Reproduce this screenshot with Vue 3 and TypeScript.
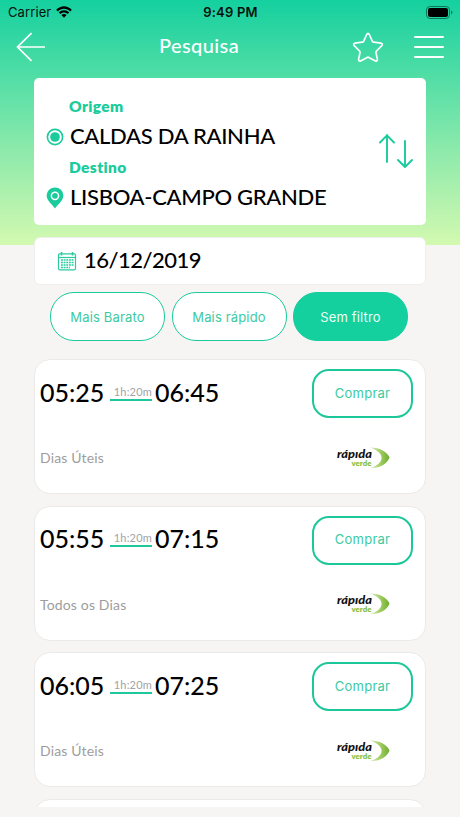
<script setup lang="ts">
interface Trip {
  departure: string
  arrival: string
  duration: string
  days: string
}

const filters: { label: string; active: boolean }[] = [
  { label: 'Mais Barato', active: false },
  { label: 'Mais rápido', active: false },
  { label: 'Sem filtro', active: true },
]

const trips: Trip[] = [
  { departure: '05:25', arrival: '06:45', duration: '1h:20m', days: 'Dias Úteis' },
  { departure: '05:55', arrival: '07:15', duration: '1h:20m', days: 'Todos os Dias' },
  { departure: '06:05', arrival: '07:25', duration: '1h:20m', days: 'Dias Úteis' },
]
</script>

<template>
  <div class="screen">
    <div class="status">
      <div class="carrier">
        <span class="carrier-name">Carrier</span>
        <svg width="16" height="12" viewBox="0 0 16 12">
          <path d="M0.2 3.8C4.6-.9 11.4-.9 15.8 3.8L14.2 5.4C10.7 1.9 5.3 1.9 1.8 5.4ZM2.8 6.4C5.8 3.5 10.2 3.5 13.2 6.4L11.6 8C9.5 6 6.5 6 4.4 8ZM5.4 9C6.9 7.7 9.1 7.7 10.6 9L8 11.7Z" fill="#000" />
        </svg>
      </div>
      <span class="clock">9:49 PM</span>
      <svg class="battery" width="27" height="13" viewBox="0 0 27 13">
        <rect x="0.5" y="0.5" width="23" height="12" rx="3.4" fill="none" stroke="#08775a" />
        <rect x="2" y="2" width="20" height="9" rx="2" fill="#000" />
        <path d="M25 4.6Q26.4 5.2 26.4 6.5Q26.4 7.8 25 8.4Z" fill="#08775a" />
      </svg>
    </div>

    <header class="nav">
      <svg class="back" width="30" height="30" viewBox="0 0 30 30" fill="none" stroke="#fff" stroke-width="1.7">
        <path d="M15.5 1.2L1.5 15L15.5 28.8M1.5 15H29" />
      </svg>
      <h1 class="title">Pesquisa</h1>
      <svg class="star" width="32" height="31" viewBox="0 0 32 31" fill="none" stroke="#fff" stroke-width="1.7" stroke-linejoin="round">
        <path d="M14.7 2.5Q16 .3 17.3 2.5L20.4 9.3Q20.8 10.1 21.7 10.2L29 11.2Q31.3 11.8 29.8 13.6L24.5 19Q23.9 19.7 24 20.5L25.4 27.4Q25.5 29.6 23.4 28.9L16.8 25.4Q16 25 15.2 25.4L8.6 28.9Q6.5 29.6 6.6 27.4L8 20.5Q8.1 19.7 7.5 19L2.2 13.6Q.7 11.8 3 11.2L10.3 10.2Q11.2 10.1 11.6 9.3Z" />
      </svg>
      <svg class="menu" width="30" height="24" viewBox="0 0 30 24" stroke="#fff" stroke-width="2" stroke-linecap="round">
        <path d="M1 2H29M1 12H29M1 22H29" />
      </svg>
    </header>

    <section class="route">
      <div class="places">
        <p class="label">Origem</p>
        <div class="place">
          <svg width="18" height="18" viewBox="0 0 18 18">
            <circle cx="9" cy="9" r="7.6" fill="#fff" stroke="#1acb9c" stroke-width="1.6" />
            <circle cx="9" cy="9" r="4.8" fill="#1acb9c" />
          </svg>
          <span class="name">CALDAS DA RAINHA</span>
        </div>
        <p class="label">Destino</p>
        <div class="place">
          <svg width="18" height="22" viewBox="0 0 18 22">
            <path d="M9 21.5C7 18.5.6 13.5.6 8.6A8.4 8.2 0 0 1 17.4 8.6C17.4 13.5 11 18.5 9 21.5Z" fill="#1acb9c" />
            <circle cx="9" cy="8.8" r="3.6" fill="none" stroke="#fff" stroke-width="1.5" />
          </svg>
          <span class="name">LISBOA-CAMPO GRANDE</span>
        </div>
      </div>
      <svg class="swap" width="36" height="36" viewBox="0 0 36 36" fill="none" stroke="#1acb9c" stroke-width="1.9" stroke-linecap="round" stroke-linejoin="round">
        <path d="M9 29V2M2 9.5L9 2.4L16 9.5M27 8V34M20 27L27 34L34 27" />
      </svg>
    </section>

    <section class="date">
      <svg width="20" height="20" viewBox="0 0 20 20" fill="none" stroke="#2bc9a0">
        <rect x="1.5" y="2.8" width="17" height="16" rx="1.2" stroke-width="1.2" />
        <path d="M1.5 6.5H18.5" stroke-width="1.2" />
        <path d="M4.5 1V4.5M15.5 1V4.5" stroke-width="1.6" />
        <path d="M4 9H16.5M4 11.5H16.5M4 14H16.5M4 16.5H13" stroke-width="1.7" stroke-dasharray="1.9 .75" />
      </svg>
      <span class="day">16/12/2019</span>
    </section>

    <div class="filters">
      <button v-for="f in filters" :key="f.label" class="filter" :class="{ active: f.active }">{{ f.label }}</button>
    </div>

    <main class="list">
      <article v-for="t in trips" :key="t.departure" class="trip">
        <div class="top">
          <div class="times">
            <span class="time">{{ t.departure }}</span>
            <span class="duration">{{ t.duration }}</span>
            <span class="time">{{ t.arrival }}</span>
          </div>
          <button class="buy">Comprar</button>
        </div>
        <div class="bottom">
          <span class="days">{{ t.days }}</span>
          <svg class="logo" width="56" height="24" viewBox="0 0 56 24">
            <defs>
              <linearGradient id="swoosh" x1="0" x2="1">
                <stop offset="0" stop-color="#e4f0d2" />
                <stop offset="0.5" stop-color="#a5cf68" />
                <stop offset="1" stop-color="#6fae2e" />
              </linearGradient>
            </defs>
            <path d="M33.5 1.5C42 1 51 5 53.5 11.5C51 18 44 22.5 34 22C40 20.5 44.5 17 45.5 13C46.5 8 41 3.5 33.5 1.5Z" fill="url(#swoosh)" />
            <text x="1" y="12" class="brand" textLength="35" lengthAdjust="spacingAndGlyphs">rápıda</text>
            <text x="15.5" y="20" class="sub" textLength="20" lengthAdjust="spacingAndGlyphs">verde</text>
          </svg>
        </div>
      </article>
      <article class="trip"></article>
    </main>
  </div>
</template>

<style>
body {
  margin: 0;
  background: #fff;
}
</style>

<style scoped>
.screen {
  box-sizing: border-box;
  width: 460px;
  height: 817px;
  overflow: hidden;
  display: flex;
  flex-direction: column;
  background: linear-gradient(#14d09f 0, #4fdda6 30%, #8eeaab 62%, #d3f9b0 100%) 0 0 / 100% 245px no-repeat, #f6f5f3;
  font-family: Lato, sans-serif;
  font-variant-ligatures: none;
}
.status {
  height: 24px;
  flex: none;
  display: grid;
  grid-template-columns: 1fr auto 1fr;
  align-items: center;
  padding: 0 7px 0 8px;
  font-family: Inter, sans-serif;
  font-size: 13px;
  color: #06130f;
}
.carrier {
  display: flex;
  align-items: center;
  gap: 5px;
}
.carrier-name {
  letter-spacing: 0.1px;
}
.clock {
  font-weight: 600;
  letter-spacing: 0.2px;
}
.battery {
  justify-self: end;
}
.nav {
  height: 54px;
  flex: none;
  box-sizing: border-box;
  padding: 0 16px 8px;
  display: flex;
  align-items: center;
}
.title {
  margin: 0 0 4px 113px;
  font-size: 20px;
  font-weight: 500;
  letter-spacing: 0.4px;
  color: #fff;
  width: 80px;
  white-space: nowrap;
}
.star {
  margin-left: auto;
}
.menu {
  margin-left: 30px;
}
.route {
  height: 147px;
  flex: none;
  margin: 0 34px;
  box-sizing: border-box;
  padding: 18px 12px 0 12px;
  display: flex;
  justify-content: space-between;
  background: #fff;
  border-radius: 5px;
}
.label {
  margin: 0 0 0 23px;
  height: 21px;
  line-height: 21px;
  font-size: 15.5px;
  font-weight: 800;
  letter-spacing: 0.4px;
  color: #1acb9c;
}
.place {
  height: 40px;
  display: flex;
  align-items: center;
  gap: 6px;
  font-size: 22px;
  color: #000;
  white-space: nowrap;
}
.place svg {
  flex: none;
}
.name {
  font-weight: 500;
  letter-spacing: -0.3px;
  margin-bottom: 4px;
}
.swap {
  margin-top: 37px;
  flex: none;
}
.date {
  height: 48px;
  flex: none;
  margin: 12px 34px 0;
  box-sizing: border-box;
  padding: 0 22px;
  display: flex;
  align-items: center;
  gap: 7px;
  background: #fff;
  border: 1px solid #eeeeec;
  border-radius: 6px;
}
.date svg {
  margin-bottom: 1px;
}
.day {
  font-size: 22px;
  font-weight: 500;
  letter-spacing: -0.5px;
  color: #000;
  margin-bottom: 4px;
}
.filters {
  margin: 7px 50px 0;
  flex: none;
  display: flex;
  gap: 6.5px;
}
.filter {
  width: 115px;
  height: 49px;
  padding: 0;
  border: 1px solid #1acb9c;
  border-radius: 24px;
  background: #fff;
  color: #3dcaa2;
  font: 400 13px Inter, sans-serif;
  letter-spacing: 0.15px;
}
.filter.active {
  background: #14cf9e;
  border-color: #14cf9e;
  color: #e9fff6;
}
.list {
  height: 448px;
  flex: none;
  margin: 18px 34px 0;
  overflow: hidden;
  display: flex;
  flex-direction: column;
  gap: 11.7px;
}
.trip {
  height: 135px;
  flex: none;
  box-sizing: border-box;
  border: 1px solid #ebeae8;
  border-radius: 16px;
  background: #fff;
  padding: 9px 12px 0 5px;
}
.top {
  display: flex;
  justify-content: space-between;
}
.times {
  display: flex;
  height: 48px;
  align-items: center;
}
.time {
  width: 64px;
  font-size: 25px;
  font-weight: 500;
  color: #000;
  white-space: nowrap;
  margin-bottom: 3px;
}
.duration {
  width: 42px;
  height: 15px;
  margin: 0 3px 0 6px;
  box-sizing: border-box;
  border-bottom: 2px solid #20c79c;
  text-align: right;
  font-size: 11px;
  letter-spacing: 0.2px;
  line-height: 11px;
  color: #a3a3a3;
  white-space: nowrap;
}
.buy {
  width: 101px;
  height: 49px;
  padding: 0 0 2px;
  border: 2px solid #1cc79a;
  border-radius: 17px;
  background: #fff;
  color: #3dcaa2;
  font: 400 13px Inter, sans-serif;
  letter-spacing: 0.25px;
}
.bottom {
  margin-top: 27px;
  height: 25px;
  display: flex;
  align-items: center;
  justify-content: space-between;
}
.days {
  font-size: 14px;
  color: #9d9d9d;
  letter-spacing: 0.15px;
}
.logo {
  margin-right: 21px;
}
.brand {
  font: italic 900 11px Lato, sans-serif;
  fill: #111;
}
.sub {
  font: 800 6.5px Lato, sans-serif;
  fill: #8cc044;
}
</style>
